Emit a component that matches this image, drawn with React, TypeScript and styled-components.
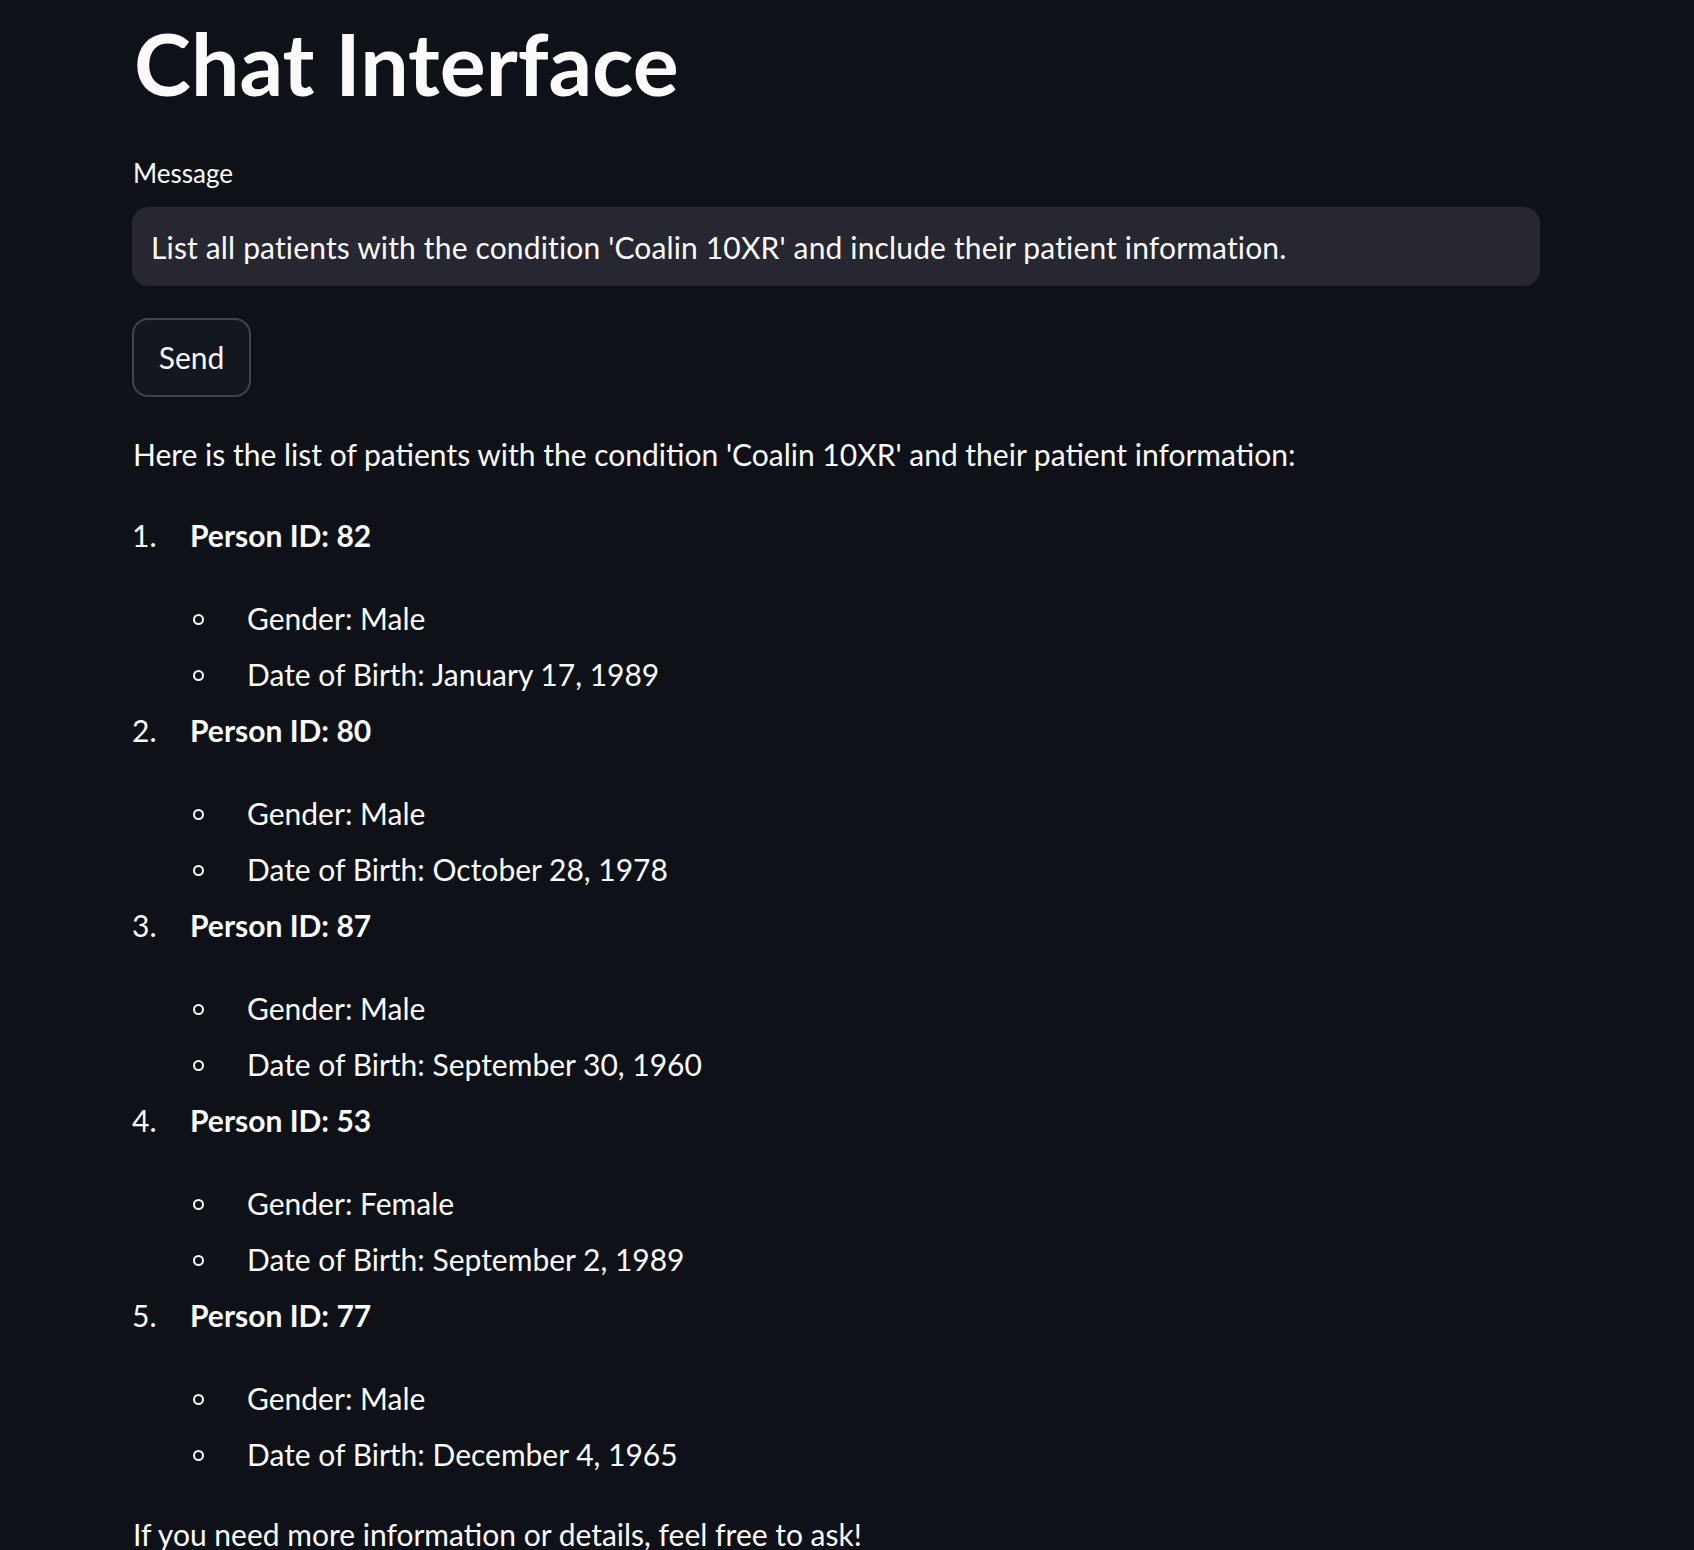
import React from "react";
import styled, { createGlobalStyle } from "styled-components";

const GlobalStyle = createGlobalStyle`
  html, body {
    margin: 0;
    padding: 0;
    background: #0e1117;
  }
  body {
    color: #fafafa;
    font-family: Lato, "Noto Sans", sans-serif;
    -webkit-font-smoothing: antialiased;
  }
`;

const Page = styled.main`
  min-height: 1550px;
  background: #0e1117;
  padding: 12px 0 0 132px;
  box-sizing: border-box;
`;

const Content = styled.div`
  width: 1408px;
  display: flex;
  flex-direction: column;
  align-items: flex-start;
`;

const Title = styled.h1`
  margin: 0 0 41px 2px;
  font-size: 86px;
  line-height: 102px;
  font-weight: 700;
  letter-spacing: 0;
  color: #fafafa;
`;

const Label = styled.label`
  display: block;
  margin: 0 0 16px 1px;
  font-size: 26px;
  line-height: 36px;
  color: #fafafa;
`;

const Input = styled.input`
  width: 100%;
  height: 79px;
  box-sizing: border-box;
  margin: 0 0 32px;
  padding: 0 19px;
  border: none;
  outline: none;
  border-radius: 16px;
  background: #262730;
  color: #fafafa;
  font-family: Lato, "Noto Sans", sans-serif;
  font-size: 30px;
  line-height: 51px;
  letter-spacing: 0.15px;
`;

const Button = styled.button`
  width: 119px;
  height: 79px;
  box-sizing: border-box;
  margin: 0 0 32px;
  padding: 0;
  border: 2px solid rgba(250, 250, 250, 0.2);
  border-radius: 16px;
  background: #131720;
  color: #fafafa;
  font-family: Lato, "Noto Sans", sans-serif;
  font-size: 30px;
  line-height: 51px;
  cursor: pointer;
`;

const Paragraph = styled.p<{ $after?: number }>`
  margin: 0 0 ${(p) => p.$after ?? 0}px 1px;
  font-size: 30px;
  line-height: 51px;
  color: #fafafa;
`;

const OrderedList = styled.ol`
  list-style: none;
  margin: 0 0 29px;
  padding: 0;
  width: 100%;
`;

const Item = styled.li<{ $first?: boolean }>`
  display: grid;
  grid-template-columns: 58px 1fr;
  margin-top: ${(p) => (p.$first ? 0 : 5)}px;
  font-size: 30px;
  line-height: 51px;
`;

const Number = styled.span`
  font-weight: 400;
`;

const Body = styled.div`
  display: flex;
  flex-direction: column;
`;

const Strong = styled.strong`
  font-weight: 700;
  margin-bottom: 32px;
`;

const SubList = styled.ul`
  list-style: none;
  margin: 0;
  padding: 0;
`;

const SubItem = styled.li<{ $first?: boolean }>`
  display: grid;
  grid-template-columns: 57px 1fr;
  margin-top: ${(p) => (p.$first ? 0 : 5)}px;
  align-items: center;
`;

const Circle = styled.span`
  display: block;
  width: 11px;
  height: 11px;
  box-sizing: border-box;
  margin: 2px 0 0 3px;
  border: 2px solid #fafafa;
  border-radius: 50%;
`;

const patients = [
  { id: 82, gender: "Male", dob: "January 17, 1989" },
  { id: 80, gender: "Male", dob: "October 28, 1978" },
  { id: 87, gender: "Male", dob: "September 30, 1960" },
  { id: 53, gender: "Female", dob: "September 2, 1989" },
  { id: 77, gender: "Male", dob: "December 4, 1965" },
];

export default function App() {
  return (
    <>
      <GlobalStyle />
      <Page>
        <Content>
          <Title>Chat Interface</Title>
          <Label htmlFor="msg">Message</Label>
          <Input
            id="msg"
            readOnly
            value="List all patients with the condition 'Coalin 10XR' and include their patient information."
          />
          <Button>Send</Button>
          <Paragraph $after={30}>
            Here is the list of patients with the condition 'Coalin 10XR' and their patient information:
          </Paragraph>
          <OrderedList>
            {patients.map((p, i) => (
              <Item key={p.id} $first={i === 0}>
                <Number>{i + 1}.</Number>
                <Body>
                  <Strong>Person ID: {p.id}</Strong>
                  <SubList>
                    <SubItem $first>
                      <Circle />
                      <span>Gender: {p.gender}</span>
                    </SubItem>
                    <SubItem>
                      <Circle />
                      <span>Date of Birth: {p.dob}</span>
                    </SubItem>
                  </SubList>
                </Body>
              </Item>
            ))}
          </OrderedList>
          <Paragraph>If you need more information or details, feel free to ask!</Paragraph>
        </Content>
      </Page>
    </>
  );
}
